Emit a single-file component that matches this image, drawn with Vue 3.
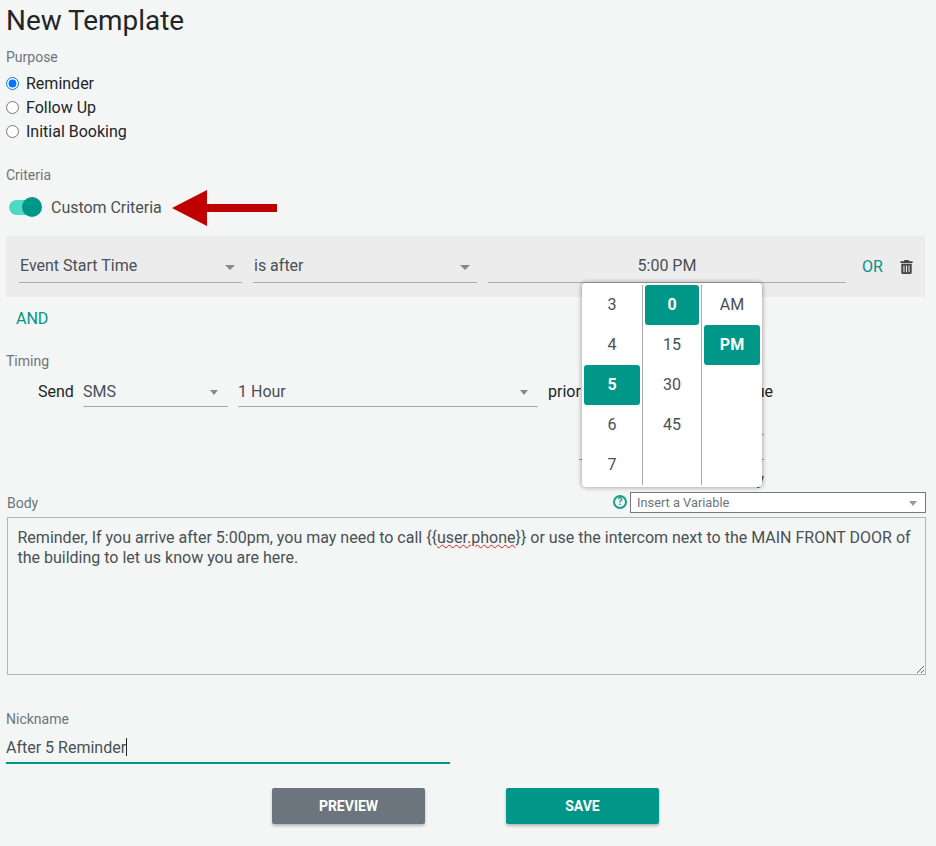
<script setup>
const purposes = [
  { label: 'Reminder', checked: true },
  { label: 'Follow Up', checked: false },
  { label: 'Initial Booking', checked: false }
]
const hours = ['3', '4', '5', '6', '7']
const minutes = ['0', '15', '30', '45']
const periods = ['AM', 'PM']
const openBraces = String.fromCharCode(123, 123)
const closeBraces = String.fromCharCode(125, 125)
</script>

<template>
  <div class="page">
    <h1 class="title">New Template</h1>

    <div class="label purpose-label">Purpose</div>
    <div class="radios">
      <label v-for="p in purposes" :key="p.label" class="radio">
        <input type="radio" name="purpose" :checked="p.checked" />
        <span>{{ p.label }}</span>
      </label>
    </div>

    <div class="label criteria-label">Criteria</div>
    <div class="toggle-row">
      <span class="toggle"><span class="thumb"></span></span>
      <span class="toggle-text">Custom Criteria</span>
      <svg class="arrow" width="105" height="36" viewBox="0 0 105 36">
        <path d="M0 18 L35 0 V14 H105 V22 H35 V36 Z" fill="#c00000" />
      </svg>
    </div>

    <div class="criteria-box">
      <div class="field w-event"><span>Event Start Time</span><i class="caret"></i></div>
      <div class="field w-cond"><span>is after</span><i class="caret"></i></div>
      <div class="field w-time center"><span>5:00 PM</span></div>
      <span class="or">OR</span>
      <svg class="trash" width="13" height="14" viewBox="0 0 13 14">
        <path fill="#444" d="M4.5 0h4l.6 1.3H12.6v1.6H.4V1.3h3.5zM1.3 3.8h10.4v8.7c0 .8-.6 1.5-1.4 1.5H2.7c-.8 0-1.4-.7-1.4-1.5z" />
        <path fill="#ececec" d="M3.4 5.4h1.1v6.9H3.4zM5.95 5.4h1.1v6.9h-1.1zM8.5 5.4h1.1v6.9H8.5z" />
      </svg>
    </div>

    <div class="and">AND</div>

    <div class="label timing-label">Timing</div>
    <div class="timing-row">
      <span class="send">Send</span>
      <div class="field w-sms"><span>SMS</span><i class="caret"></i></div>
      <div class="field w-hour"><span>1 Hour</span><i class="caret"></i></div>
      <div class="prior"><span>prior to</span><span>value</span></div>
    </div>
    <div class="hidden-top"></div>
    <div class="hidden-bottom"></div>
    <div class="hidden-text">Day</div>

    <div class="body-row">
      <span class="label">Body</span>
      <div class="body-tools">
        <span class="help">?</span>
        <div class="variable"><span>Insert a Variable</span><i class="caret small"></i></div>
      </div>
    </div>
    <div class="textarea">Reminder, If you arrive after 5:00pm, you may need to call {{ openBraces }}<span class="squiggle">user.phone</span>{{ closeBraces }} or use the intercom next to the MAIN FRONT DOOR of the building to let us know you are here.</div>

    <div class="label nick-label">Nickname</div>
    <div class="nick-input"><span>After 5 Reminder</span><i class="text-caret"></i></div>

    <div class="actions">
      <button class="btn grey">PREVIEW</button>
      <button class="btn teal">SAVE</button>
    </div>

    <div class="picker">
      <div class="col col-h">
        <div v-for="h in hours" :key="h" class="cell" :class="{ on: h === '5' }">{{ h }}</div>
      </div>
      <div class="col col-m">
        <div v-for="m in minutes" :key="m" class="cell" :class="{ on: m === '0' }">{{ m }}</div>
      </div>
      <div class="col col-p">
        <div v-for="p in periods" :key="p" class="cell" :class="{ on: p === 'PM' }">{{ p }}</div>
      </div>
    </div>
  </div>
</template>

<style>
html, body { margin: 0; background: #f4f6f5; }
</style>

<style scoped>
.page {
  position: relative;
  width: 936px;
  height: 846px;
  overflow: hidden;
  box-sizing: border-box;
  padding-left: 6px;
  background: #f4f6f5;
  font-family: Roboto, "Liberation Sans", sans-serif;
  font-size: 16px;
  color: #212529;
}
.title {
  margin: 0;
  height: 42px;
  line-height: 42px;
  font-size: 27.9px;
  font-weight: 400;
}
.label {
  font-size: 14px;
  line-height: 20px;
  color: #6c757d;
}
.purpose-label { margin-top: 5px; }
.radios { margin-top: 4px; display: flex; flex-direction: column; }
.radio { display: flex; align-items: center; gap: 7px; height: 24px; }
.radio input { margin: 0; width: 13px; height: 13px; }
.criteria-label { margin-top: 22px; }
.toggle-row { margin-top: 4px; height: 36px; display: flex; align-items: center; }
.toggle {
  position: relative;
  display: block;
  width: 26px;
  height: 15px;
  margin-left: 3px;
  border-radius: 8px;
  background: #4dd8c8;
}
.thumb {
  position: absolute;
  left: 13px;
  top: -3px;
  width: 20px;
  height: 20px;
  border-radius: 50%;
  background: #009688;
}
.toggle-text { margin-left: 16px; color: #495057; letter-spacing: -0.03px; }
.arrow { margin-left: 10px; margin-top: 2px; }
.criteria-box {
  margin-top: 11px;
  width: 919px;
  height: 61px;
  box-sizing: border-box;
  padding-left: 13px;
  background: #ececec;
  display: flex;
  align-items: center;
}
.field {
  box-sizing: border-box;
  height: 32px;
  border-bottom: 1px solid #aaa;
  display: flex;
  align-items: center;
  justify-content: space-between;
  color: #495057;
  padding-right: 7px;
  padding-bottom: 2px;
  flex: none;
}
.field.center { justify-content: center; padding-right: 0; }
.w-event { width: 223px; padding-left: 1px; }
.w-cond { width: 224px; margin-left: 11px; padding-left: 1px; }
.w-time { width: 358px; margin-left: 11px; }
.caret {
  display: block;
  width: 0;
  height: 0;
  margin-top: 4px;
  border-left: 5px solid transparent;
  border-right: 5px solid transparent;
  border-top: 5px solid #888;
}
.or { margin-left: 16px; color: #009688; }
.trash { margin-left: 17px; }
.and { margin-top: 12px; margin-left: 10px; line-height: 20px; color: #009688; }
.timing-label { margin-top: 22px; }
.timing-row {
  margin-top: 4px;
  height: 32px;
  padding-left: 32px;
  display: flex;
  align-items: center;
}
.send { width: 45px; flex: none; }
.timing-row .field { padding-top: 2px; padding-bottom: 0; padding-right: 10px; }
.timing-row .caret {
  margin-top: 2px;
  border-left-width: 4.5px;
  border-right-width: 4.5px;
}
.w-sms { width: 145px; }
.w-hour { width: 300px; margin-left: 10px; }
.prior {
  width: 225px;
  margin-left: 10px;
  display: flex;
  justify-content: space-between;
}
.hidden-top {
  box-sizing: border-box;
  margin-top: 27px;
  margin-left: 673px;
  width: 85px;
  height: 25px;
  border-top: 1px solid #999;
}
.hidden-bottom {
  box-sizing: border-box;
  margin-left: 573px;
  width: 185px;
  height: 1px;
  border-bottom: 1px solid #999;
}
.hidden-text {
  box-sizing: border-box;
  width: 758px;
  height: 24px;
  padding-top: 10px;
  line-height: 20px;
  text-align: right;
  color: #495057;
}
.body-row {
  margin-top: 8px;
  margin-left: 1px;
  width: 919px;
  height: 21px;
  display: flex;
  align-items: center;
  justify-content: space-between;
}
.body-tools { display: flex; align-items: center; gap: 3px; }
.help {
  box-sizing: border-box;
  width: 14px;
  height: 14px;
  margin-top: -2px;
  border: 2px solid #1a9c8f;
  border-radius: 50%;
  font-size: 10px;
  font-weight: 700;
  line-height: 10px;
  text-align: center;
  color: #1a9c8f;
}
.variable {
  box-sizing: border-box;
  width: 296px;
  height: 21px;
  padding: 0 8px 0 6px;
  background: #fff;
  border: 1px solid #777;
  display: flex;
  align-items: center;
  justify-content: space-between;
  font-size: 12.8px;
  color: #6c757d;
}
.caret.small {
  margin-top: 2px;
  border-left-width: 4.5px;
  border-right-width: 4.5px;
  border-top-color: #999;
}
.textarea {
  box-sizing: border-box;
  margin-top: 4px;
  margin-left: 1px;
  width: 919px;
  height: 158px;
  padding: 10px 10px 8px 9.5px;
  border: 1px solid #b5b5b5;
  line-height: 20px;
  color: #495057;
  resize: both;
  overflow: auto;
}
.squiggle { text-decoration: underline wavy #e02020 1px; }
.nick-label { margin-top: 34px; }
.nick-input {
  box-sizing: border-box;
  margin-top: 4px;
  width: 444px;
  height: 31px;
  border-bottom: 2px solid #009688;
  display: flex;
  align-items: center;
  padding-bottom: 1px;
  color: #495057;
}
.text-caret { display: block; width: 1px; height: 18px; background: #222; }
.actions {
  margin-top: 24px;
  margin-left: 266px;
  display: flex;
  gap: 81px;
}
.btn {
  width: 153px;
  height: 36px;
  border: 0;
  border-radius: 2px;
  font-family: inherit;
  font-size: 14px;
  font-weight: 700;
  color: #fff;
  box-shadow: 0 2px 3px rgba(0, 0, 0, 0.25);
}
.grey { background: #6c757d; }
.teal { background: #009688; }
.picker {
  position: absolute;
  left: 582px;
  top: 283px;
  width: 180px;
  height: 204px;
  box-sizing: border-box;
  padding: 2px 0;
  display: flex;
  background: #fff;
  border-radius: 4px;
  box-shadow: 0 0 4px 1px rgba(0, 0, 0, 0.3);
}
.col {
  flex: none;
  box-sizing: border-box;
  padding: 0 2px;
  border-right: 1px solid #aaa;
}
.col-h { width: 61px; }
.col-m { width: 59px; }
.col-p { width: 60px; border-right: 0; }
.cell {
  height: 40px;
  line-height: 40px;
  text-align: center;
  color: #495057;
  border-radius: 3px;
}
.cell.on { background: #009688; color: #fff; font-weight: 700; }
</style>
